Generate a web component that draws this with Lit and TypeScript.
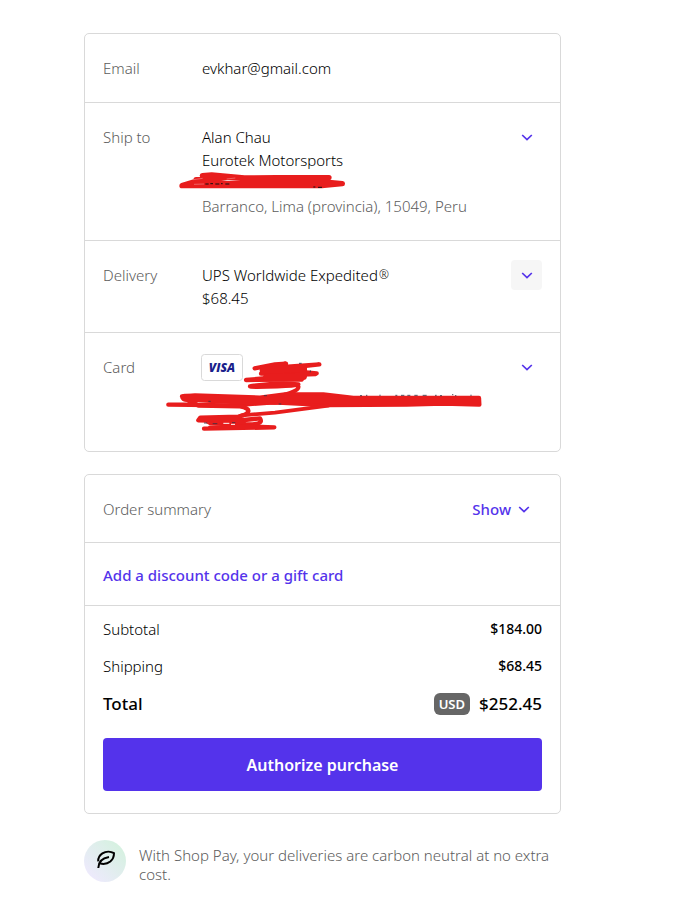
import { LitElement, html, css, svg } from "lit";
import { customElement, property } from "lit/decorators.js";

const chevron = html`<svg class="chevron" viewBox="0 0 12 8" width="12" height="8" aria-hidden="true">
  <path d="M1.2 2 6 6.6 10.8 2" fill="none" stroke="currentColor" stroke-width="1.7" />
</svg>`;

// Red marker strokes over the street address.
const addressInk = svg`
  <g fill="#e81d1d" stroke="#e81d1d" stroke-width="16" stroke-linecap="round" stroke-linejoin="round">
    <path d="M97 35 125 33 223 42 320 41 477 41 420 50 517 59 455 65 36 65 78 52 170 40 78 47 110 58 440 57Z" />
  </g>
  <path d="M70 47 98 43M72 61 102 60M170 45 196 42" stroke="#fff" stroke-opacity=".6" stroke-width="1.5" />
  <path d="M106 60h10M121 59h8M136 60h12M153 59h5M166 60h12M430 69h6M444 70h12" stroke="#111" stroke-width="3" />`;

// Red marker strokes over the card number and billing address.
const cardInk = svg`
  <g fill="none" stroke="#e81d1d" stroke-width="13" stroke-linecap="round" stroke-linejoin="round">
    <path d="M284 70 345 58 378 56 310 70 478 58 345 73 470 85 303 86 467 87 400 90 425 104 258 105 345 97 360 84 410 65" />
    <path d="M310 76 430 70 430 94 320 98" stroke-width="22" />
    <path d="M270 124C300 120 350 112 415 118C400 123 310 126 272 125C330 124 412 108 415 125C417 136 390 146 330 162" />
    <path d="M66 154 105 151 300 158 375 148 490 148 580 159 957 159 958 179 850 176 740 179 500 180 340 172 220 181 25 179 110 178 68 158" />
    <path d="M75 158 230 166 345 167 430 162 580 169 950 168" stroke-width="24" />
    <path d="M115 182 240 184C278 191 270 207 235 215L121 218 115 226 225 228 300 220C310 236 290 239 250 238L150 234 130 222" />
    <path d="M125 224 225 222 250 234 170 230" stroke-width="14" />
    <path d="M132 251 343 247 240 244 150 248" />
    <path d="M245 211 345 203 505 182" stroke-width="11" />
  </g>
  <path d="M417 55h8M451 76v6M145 169h7M312 152h9M356 177h8M600 152h6M618 151h4M660 149v4M706 151h6M723 151h10M742 151h9M763 151h10M788 151h12M825 151h5M840 152h6M876 149h4M885 152h4M933 149v4M132 234h10M158 236h14M216 233h10" stroke="#334" stroke-width="2.5" />
  <path d="M190 235h18M213 238h12" stroke="#fff" stroke-width="3" />`;

@customElement("detail-row")
export class DetailRow extends LitElement {
  static styles = css`
    :host {
      display: grid;
      grid-template-columns: 99px 1fr auto;
      padding: 23px 18px 22px;
      line-height: 23px;
    }
    .label {
      color: #5c5c5c;
    }
    .toggle {
      display: grid;
      place-items: center;
      width: 31px;
      height: 30px;
      margin: -4px 0;
      padding: 0;
      border: 0;
      border-radius: 4px;
      background: transparent;
      color: #5433eb;
      cursor: pointer;
    }
    .toggle.active,
    .toggle:hover {
      background: #f6f6f6;
    }
  `;

  @property() label = "";
  @property({ type: Boolean }) editable = false;
  @property({ type: Boolean }) active = false;

  render() {
    return html`
      <div class="label">${this.label}</div>
      <div><slot></slot></div>
      ${this.editable
        ? html`<button class="toggle ${this.active ? "active" : ""}" aria-label="Change ${this.label}">${chevron}</button>`
        : null}
    `;
  }
}

@customElement("app-root")
export class AppRoot extends LitElement {
  static styles = css`
    :host {
      display: block;
      padding: 33px 112px 22px 84px;
      background: #fff;
      color: #000;
      font-family: "Noto Sans", "Open Sans", sans-serif;
      font-size: 15px;
      font-weight: 330;
    }
    .card {
      border: 1px solid #d9d9d9;
      border-radius: 5px;
      margin-bottom: 22px;
    }
    .card > * + * {
      border-top: 1px solid #d9d9d9;
    }
    .muted {
      color: #5c5c5c;
    }
    .redacted {
      position: relative;
      height: 23px;
    }
    .ink {
      position: absolute;
      pointer-events: none;
    }
    .ink-address {
      left: -24px;
      top: -1px;
    }
    .ink-card {
      left: -37px;
      top: 6px;
    }
    .payment {
      position: relative;
      height: 75px;
    }
    .visa {
      display: block;
      margin: -2px 0 0 -1px;
    }
    sup {
      font-size: 12px;
      line-height: 0;
      vertical-align: 2px;
      margin-left: 1px;
    }
    button {
      font: inherit;
      border: 0;
      cursor: pointer;
    }
    .summary {
      display: flex;
      justify-content: space-between;
      align-items: center;
      padding: 23px 30px 22px 18px;
      line-height: 22px;
    }
    .link {
      display: flex;
      align-items: center;
      gap: 7px;
      padding: 0;
      background: none;
      color: #5433eb;
      font-weight: 480;
      line-height: 22px;
    }
    .discount {
      padding: 21px 18px 19px;
    }
    .checkout {
      padding: 4px 18px 22px;
    }
    .lines {
      margin: 0;
    }
    .line {
      display: flex;
      justify-content: space-between;
      align-items: center;
      height: 37px;
    }
    .line dd {
      display: flex;
      align-items: center;
      gap: 9px;
      margin: 0;
      font-size: 14px;
      font-weight: 480;
    }
    .line.total {
      height: 39px;
    }
    .total,
    .total dd {
      font-size: 17px;
      font-weight: 480;
    }
    .currency {
      padding: 0 5px;
      border-radius: 6px;
      background: #666;
      color: #fff;
      font-size: 13px;
      font-weight: 600;
      line-height: 22px;
    }
    .authorize {
      display: block;
      width: 100%;
      height: 53px;
      margin-top: 15px;
      border-radius: 4px;
      background: #5433eb;
      color: #fff;
      font-size: 16px;
      font-weight: 600;
    }
    .note {
      display: flex;
      gap: 13px;
      margin-top: 26px;
      line-height: 19px;
      color: #5c5c5c;
    }
    .note p {
      margin: 6px 0 0;
    }
    .leaf {
      flex: none;
    }
  `;

  render() {
    return html`
      <main>
        <section class="card">
          <detail-row label="Email">evkhar@gmail.com</detail-row>
          <detail-row label="Ship to" editable>
            <div>Alan Chau</div>
            <div>Eurotek Motorsports</div>
            <div class="redacted">
              <svg class="ink ink-address" viewBox="24 21 510 66" width="170" height="22" aria-hidden="true">${addressInk}</svg>
            </div>
            <div class="muted">Barranco, Lima (provincia), 15049, Peru</div>
          </detail-row>
          <detail-row label="Delivery" editable active>
            <div>UPS Worldwide Expedited<sup>®</sup></div>
            <div>$68.45</div>
          </detail-row>
          <detail-row label="Card" editable>
            <div class="payment">
              <svg class="visa" viewBox="0 0 42 27" width="42" height="27" role="img" aria-label="Visa">
                <rect x=".5" y=".5" width="41" height="26" rx="3" fill="#fff" stroke="#d9d9d9" />
                <text x="21" y="18" text-anchor="middle" font-family="Open Sans" font-size="12" font-weight="800" font-style="italic" fill="#1a1f8c">VISA</text>
              </svg>
              <svg class="ink ink-card" viewBox="15 45 960 216" width="320" height="72" aria-hidden="true">${cardInk}</svg>
            </div>
          </detail-row>
        </section>

        <section class="card">
          <div class="summary">
            <span class="muted">Order summary</span>
            <button class="link">Show ${chevron}</button>
          </div>
          <div class="discount"><button class="link">Add a discount code or a gift card</button></div>
          <div class="checkout">
            <dl class="lines">
              <div class="line"><dt>Subtotal</dt><dd>$184.00</dd></div>
              <div class="line"><dt>Shipping</dt><dd>$68.45</dd></div>
              <div class="line total"><dt>Total</dt><dd><span class="currency">USD</span>$252.45</dd></div>
            </dl>
            <button class="authorize">Authorize purchase</button>
          </div>
        </section>

        <div class="note">
          <svg class="leaf" viewBox="0 0 42 42" width="42" height="42" aria-hidden="true">
            <defs>
              <linearGradient id="tint" x1="0" y1="1" x2="1" y2="0">
                <stop offset=".15" stop-color="#edeafc" />
                <stop offset=".85" stop-color="#d6f1e1" />
              </linearGradient>
            </defs>
            <circle cx="21" cy="21" r="21" fill="url(#tint)" />
            <path
              d="M14.3 28C14.3 22 18 18.2 25 17M16.2 23.6C19.5 24.2 23.5 23.9 26.3 21.6C28.8 19.4 30 16.6 30 13.2C26.8 11.3 21.8 11.3 18.4 13.4C15.7 15.2 14 18 14.2 21.4"
              fill="none" stroke="#000" stroke-width="2" stroke-linejoin="round" />
          </svg>
          <p>With Shop Pay, your deliveries are carbon neutral at no extra cost.</p>
        </div>
      </main>
    `;
  }
}
